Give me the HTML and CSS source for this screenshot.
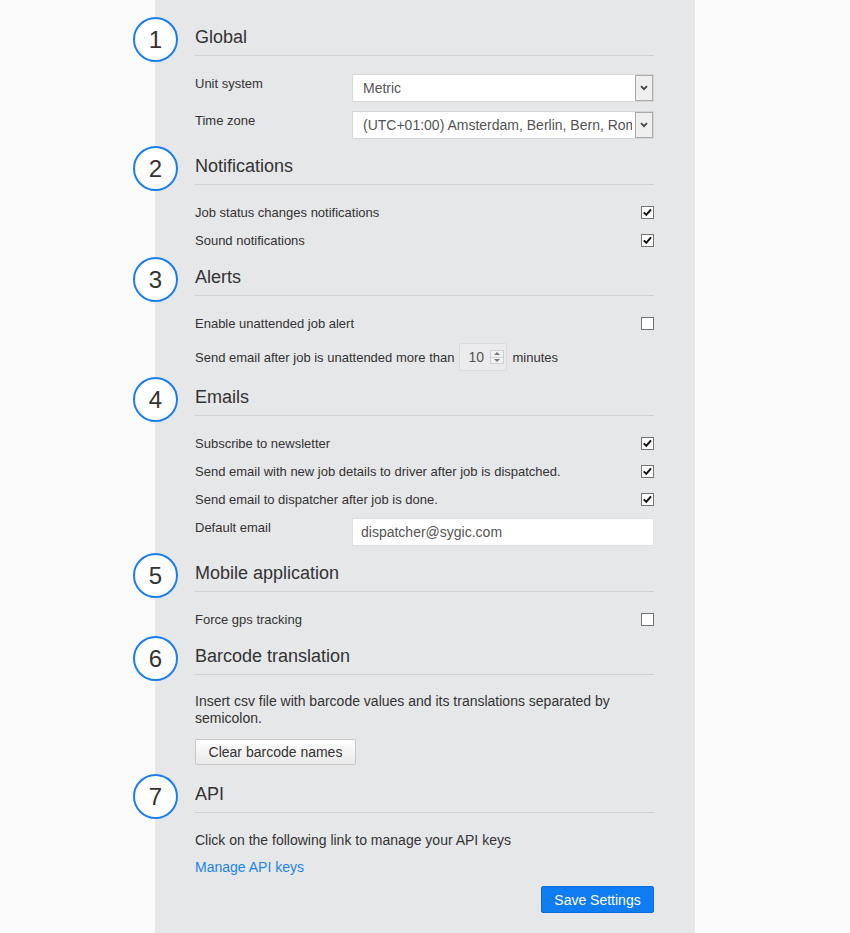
FILE: index.html
```html
<!DOCTYPE html>
<html>
<head>
<meta charset="utf-8">
<link rel="stylesheet" href="styles.css">
</head>
<body>
<div class="panel">

  <section class="sec">
    <div class="num">1</div>
    <h2 class="head">Global</h2>
    <div class="body">
      <div class="frow">
        <span class="flabel">Unit system</span>
        <div class="select"><span class="sel-text">Metric</span><span class="sel-btn"><svg width="8" height="6" viewBox="0 0 8 6"><path d="M1 1.2 L4 4.2 L7 1.2" fill="none" stroke="#444" stroke-width="1.8"/></svg></span></div>
      </div>
      <div class="frow">
        <span class="flabel">Time zone</span>
        <div class="select"><span class="sel-text">(UTC+01:00) Amsterdam, Berlin, Bern, Rome, Stockholm, Vienna</span><span class="sel-btn"><svg width="8" height="6" viewBox="0 0 8 6"><path d="M1 1.2 L4 4.2 L7 1.2" fill="none" stroke="#444" stroke-width="1.8"/></svg></span></div>
      </div>
    </div>
  </section>

  <section class="sec">
    <div class="num">2</div>
    <h2 class="head">Notifications</h2>
    <div class="body">
      <div class="crow"><span>Job status changes notifications</span><span class="cb on"><svg width="11" height="11" viewBox="0 0 11 11"><path d="M1.8 5.4 L4.3 7.9 L9 2.4" fill="none" stroke="#111" stroke-width="2"/></svg></span></div>
      <div class="crow"><span>Sound notifications</span><span class="cb on"><svg width="11" height="11" viewBox="0 0 11 11"><path d="M1.8 5.4 L4.3 7.9 L9 2.4" fill="none" stroke="#111" stroke-width="2"/></svg></span></div>
    </div>
  </section>

  <section class="sec">
    <div class="num">3</div>
    <h2 class="head">Alerts</h2>
    <div class="body">
      <div class="crow"><span>Enable unattended job alert</span><span class="cb"></span></div>
      <div class="nrow">
        <span>Send email after job is unattended more than</span>
        <div class="numinput"><span class="nval">10</span><span class="spin"><span class="up"></span><span class="down"></span></span></div>
        <span>minutes</span>
      </div>
    </div>
  </section>

  <section class="sec">
    <div class="num">4</div>
    <h2 class="head">Emails</h2>
    <div class="body">
      <div class="crow"><span>Subscribe to newsletter</span><span class="cb on"><svg width="11" height="11" viewBox="0 0 11 11"><path d="M1.8 5.4 L4.3 7.9 L9 2.4" fill="none" stroke="#111" stroke-width="2"/></svg></span></div>
      <div class="crow"><span>Send email with new job details to driver after job is dispatched.</span><span class="cb on"><svg width="11" height="11" viewBox="0 0 11 11"><path d="M1.8 5.4 L4.3 7.9 L9 2.4" fill="none" stroke="#111" stroke-width="2"/></svg></span></div>
      <div class="crow"><span>Send email to dispatcher after job is done.</span><span class="cb on"><svg width="11" height="11" viewBox="0 0 11 11"><path d="M1.8 5.4 L4.3 7.9 L9 2.4" fill="none" stroke="#111" stroke-width="2"/></svg></span></div>
      <div class="frow">
        <span class="flabel">Default email</span>
        <div class="textinput">dispatcher@sygic.com</div>
      </div>
    </div>
  </section>

  <section class="sec">
    <div class="num">5</div>
    <h2 class="head">Mobile application</h2>
    <div class="body">
      <div class="crow"><span>Force gps tracking</span><span class="cb"></span></div>
    </div>
  </section>

  <section class="sec">
    <div class="num">6</div>
    <h2 class="head">Barcode translation</h2>
    <div class="body">
      <p class="text">Insert csv file with barcode values and its translations separated by semicolon.</p>
      <div class="btnrow"><button class="btn">Clear barcode names</button></div>
    </div>
  </section>

  <section class="sec">
    <div class="num">7</div>
    <h2 class="head">API</h2>
    <div class="body">
      <p class="text first">Click on the following link to manage your API keys</p>
      <p class="text link-line"><a class="link" href="#">Manage API keys</a></p>
      <div class="saverow"><button class="btn primary">Save Settings</button></div>
    </div>
  </section>

</div>
</body>
</html>
```

FILE: styles.css
```css
* { box-sizing: border-box; }

html, body {
  margin: 0;
  padding: 0;
}

body {
  background: #fbfbfb;
  font-family: "Liberation Sans", Arial, sans-serif;
  color: #333;
  font-size: 13px;
}

.panel {
  width: 540px;
  margin-left: 155px;
  min-height: 933px;
  background: #e6e7e9;
  padding: 19px 41px 0 40px;
}

.sec {
  position: relative;
}

.num {
  position: absolute;
  left: -62px;
  top: -2px;
  width: 45px;
  height: 45px;
  border: 2px solid #1a7ef5;
  border-radius: 50%;
  background: #fff;
  display: flex;
  align-items: center;
  justify-content: center;
  font-size: 24px;
  color: #333;
  line-height: 1;
  padding-top: 1px;
}

.head {
  margin: 0;
  height: 37px;
  border-bottom: 1px solid #cfd0d3;
  font-size: 18px;
  font-weight: normal;
  line-height: 37px;
  color: #333;
}

.body {
  padding: 13px 0 5px;
}

.frow {
  display: flex;
  align-items: flex-start;
  padding: 5px 0 4px;
}

.flabel {
  width: 157px;
  flex: none;
  margin-top: 1px;
  line-height: 17px;
}

.select {
  position: relative;
  width: 302px;
  height: 28px;
  background: #fff;
  border: 1px solid #d6d6d8;
  display: flex;
  align-items: center;
  padding: 0 21px 0 10px;
  overflow: hidden;
}

.sel-text {
  white-space: nowrap;
  overflow: hidden;
  font-size: 14px;
  color: #555;
}

.sel-btn {
  position: absolute;
  right: 0;
  top: 0;
  bottom: 0;
  width: 18px;
  background: #efefef;
  border: 1px solid #a9a9a9;
  display: flex;
  align-items: center;
  justify-content: center;
}

.crow {
  height: 28px;
  display: flex;
  align-items: center;
  justify-content: space-between;
}

.cb {
  width: 13px;
  height: 13px;
  border: 1px solid #767676;
  background: #fff;
  display: flex;
  align-items: center;
  justify-content: center;
}

.nrow {
  display: flex;
  align-items: center;
  gap: 5px;
  padding: 6px 0 3px;
}

.numinput {
  width: 48px;
  height: 28px;
  background: #ebebed;
  border: 1px solid #dcdcde;
  border-radius: 2px;
  display: flex;
  align-items: center;
  padding-left: 8px;
  gap: 6px;
}

.nval {
  font-size: 14px;
  color: #555;
}

.spin {
  width: 14px;
  height: 14px;
  border: 1px solid #d0d0d2;
  background: #f2f2f3;
  display: flex;
  flex-direction: column;
}

.spin .up, .spin .down {
  flex: 1;
  display: flex;
  align-items: center;
  justify-content: center;
}

.spin .up { border-bottom: 1px solid #d0d0d2; }

.spin .up::before {
  content: "";
  border-left: 3px solid transparent;
  border-right: 3px solid transparent;
  border-bottom: 3px solid #777;
}

.spin .down::before {
  content: "";
  border-left: 3px solid transparent;
  border-right: 3px solid transparent;
  border-top: 3px solid #777;
}

.textinput {
  width: 302px;
  height: 28px;
  background: #fff;
  border: 1px solid #e0e0e2;
  padding: 0 8px;
  font-size: 14px;
  color: #555;
  line-height: 26px;
}

.text {
  margin: 5px 0 0;
  font-size: 14px;
  line-height: 17px;
  color: #333;
}

.text.first { margin-top: 6px; }

.text.link-line { margin-top: 10px; }

.link {
  color: #1c84ee;
  text-decoration: none;
}

.btnrow {
  margin-top: 12px;
  margin-bottom: 6px;
}

.btn {
  font-family: "Liberation Sans", Arial, sans-serif;
  font-size: 14px;
  color: #333;
  height: 26px;
  padding: 0 12px;
  border: 1px solid #c8c8ca;
  border-radius: 2px;
  background: linear-gradient(#ffffff, #e9e9ea);
  cursor: pointer;
}

.btnrow .btn { width: 161px; }

.saverow {
  display: flex;
  justify-content: flex-end;
  margin-top: 10px;
}

.btn.primary {
  width: 113px;
  height: 27px;
  color: #fff;
  background: #0f7cf4;
  border: 1px solid #0a6ad6;
}
```
